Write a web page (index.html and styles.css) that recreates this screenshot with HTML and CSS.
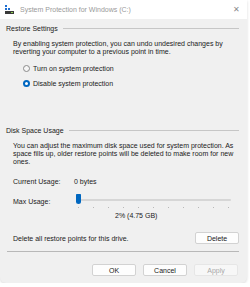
FILE: index.html
```html
<!DOCTYPE html>
<html lang="en">

<head>
    <meta charset="UTF-8">
    <title>System Protection for Windows (C:)</title>
    <link rel="stylesheet" href="styles.css">
</head>

<body>
    <div class="window">
        <div class="titlebar">
            <svg class="app-icon" width="9" height="9" viewBox="0 0 9 9">
                <rect x="0" y="0" width="2" height="2" fill="#1f6fd1"/>
                <rect x="0" y="3" width="2" height="2" fill="#1f6fd1"/>
                <rect x="3" y="3" width="2" height="2" fill="#1f6fd1"/>
                <rect x="0" y="6" width="9" height="3" fill="#3a3a3a"/>
                <rect x="6" y="7" width="2" height="1" fill="#8fd14f"/>
            </svg>
            <span class="title">System Protection for Windows (C:)</span>
            <span class="close">&#x2715;</span>
        </div>

        <div class="content">
            <div class="group-title">Restore Settings</div>
            <div class="group-body">
                <p class="text">By enabling system protection, you can undo undesired changes by reverting your computer to a previous point in time.</p>
                <div class="radios">
                    <label class="radio"><span class="dot"></span>Turn on system protection</label>
                    <label class="radio checked"><span class="dot"></span>Disable system protection</label>
                </div>
            </div>

            <div class="group-title">Disk Space Usage</div>
            <div class="group-body">
                <p class="text">You can adjust the maximum disk space used for system protection. As space fills up, older restore points will be deleted to make room for new ones.</p>
                <div class="row usage">
                    <span class="row-label">Current Usage:</span>
                    <span>0 bytes</span>
                </div>
                <div class="row max">
                    <span class="row-label">Max Usage:</span>
                    <div class="slider">
                        <div class="track"></div>
                        <div class="thumb"></div>
                        <div class="ticks">
                            <i></i><i></i><i></i><i></i><i></i><i></i><i></i><i></i><i></i><i></i><i></i>
                        </div>
                    </div>
                </div>
                <div class="percent">2% (4.75 GB)</div>
                <div class="row delete-row">
                    <span>Delete all restore points for this drive.</span>
                    <button class="btn">Delete</button>
                </div>
            </div>

            <div class="separator"></div>

            <div class="footer">
                <button class="btn">OK</button>
                <button class="btn">Cancel</button>
                <button class="btn disabled">Apply</button>
            </div>
        </div>
    </div>
</body>

</html>
```

FILE: styles.css
```css
body {
    margin: 0;
    background-color: #ffffff;
    font-family: "Liberation Sans", Arial, sans-serif;
    font-size: 7px;
    color: #1a1a1a;
}

.window {
    width: 247px;
    height: 283px;
    background-color: #f0f0f0;
    border-radius: 0 0 6px 6px;
    box-shadow: 0 1px 3px rgba(0, 0, 0, 0.15);
    overflow: hidden;
}

.titlebar {
    height: 19px;
    background-color: #ffffff;
    display: flex;
    align-items: center;
    padding: 0 5px;
}

.app-icon {
    margin-right: 6px;
}

.title {
    flex: 1;
    color: #9a9a9a;
    font-size: 7px;
}

.close {
    color: #8a8a8a;
    font-size: 8px;
    margin-right: 2px;
}

.content {
    padding: 3px 8px 0 6px;
}

.group-title {
    display: flex;
    align-items: center;
    gap: 5px;
    height: 10px;
    margin-top: 1px;
}

.group-title::after {
    content: "";
    flex: 1;
    height: 1px;
    background-color: #c6c6c6;
}

.group-body {
    padding: 0 0 0 7px;
}

.text {
    margin: 7px 0 0;
    line-height: 8px;
}

.radios {
    display: flex;
    flex-direction: column;
    gap: 6px;
    margin: 8px 0 0 10px;
    height: 60px;
}

.radio {
    display: flex;
    align-items: center;
    gap: 3px;
    height: 9px;
}

.dot {
    width: 7px;
    height: 7px;
    border-radius: 50%;
    border: 1px solid #8a8a8a;
    background-color: #f6f6f6;
    box-sizing: border-box;
}

.radio.checked .dot {
    border: 2px solid #0067c0;
    background-color: #ffffff;
}

.row {
    display: flex;
    align-items: center;
}

.row-label {
    width: 61px;
}

.usage {
    margin-top: 12px;
}

.max {
    margin-top: 9px;
    height: 14px;
}

.slider {
    position: relative;
    width: 157px;
    height: 14px;
}

.track {
    position: absolute;
    left: 2px;
    right: 0;
    top: 5px;
    height: 2px;
    background-color: #d6d6d6;
    border-radius: 1px;
}

.thumb {
    position: absolute;
    left: 2px;
    top: 0;
    width: 5px;
    height: 10px;
    background-color: #0067c0;
    border-radius: 1px 1px 3px 3px;
}

.ticks {
    position: absolute;
    left: 4px;
    right: 2px;
    top: 13px;
    display: flex;
    justify-content: space-between;
}

.ticks i {
    width: 1px;
    height: 1px;
    background-color: #b8b8b8;
}

.percent {
    margin: 4px 0 0;
    padding-left: 102px;
    height: 9px;
}

.delete-row {
    justify-content: space-between;
    margin-top: 11px;
}

.btn {
    width: 44px;
    height: 12px;
    padding: 0;
    background-color: #fdfdfd;
    border: 1px solid #d2d2d2;
    border-radius: 2px;
    font-family: inherit;
    font-size: 7px;
    color: #1a1a1a;
}

.btn.disabled {
    background-color: #f7f7f7;
    border-color: #e6e6e6;
    color: #a8a8a8;
}

.separator {
    height: 1px;
    background-color: #b8b8b8;
    margin: 7px 0 0 1px;
}

.footer {
    display: flex;
    justify-content: flex-end;
    gap: 7px;
    margin-top: 12px;
    padding-right: 1px;
}
```
